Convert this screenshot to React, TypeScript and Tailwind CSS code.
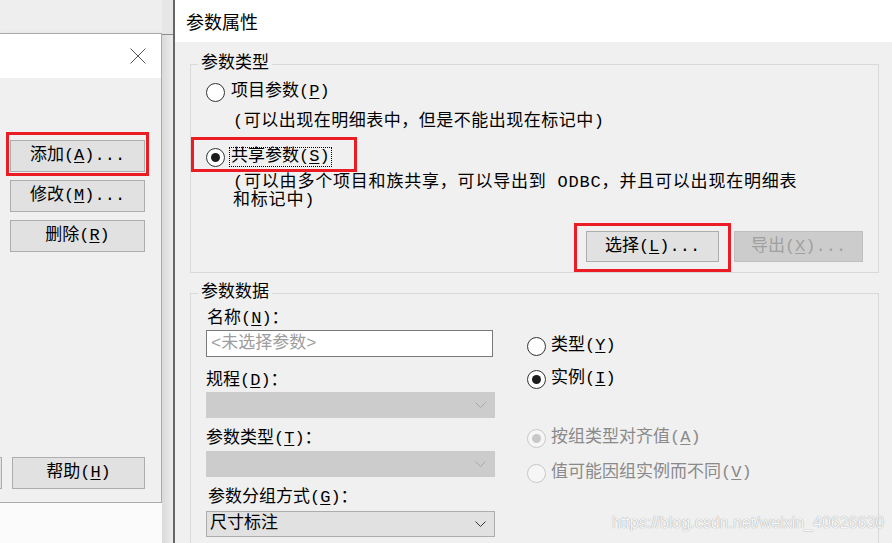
import React from "react";

const body = "font-['Liberation_Mono','Noto_Sans_CJK_SC',monospace] text-[17px] text-black";

function Radio({ checked = false, disabled = false }: { checked?: boolean; disabled?: boolean }) {
  return (
    <div
      className={
        disabled
          ? "w-[19px] h-[19px] shrink-0 rounded-full border-[1.5px] border-[#c8c8c8] bg-[#f6f6f6] flex items-center justify-center"
          : "w-[19px] h-[19px] shrink-0 rounded-full border-[1.5px] border-[#333333] bg-white flex items-center justify-center"
      }
    >
      {checked && (
        <div className={disabled ? "w-[9px] h-[9px] rounded-full bg-[#c8c8c8]" : "w-[9px] h-[9px] rounded-full bg-[#1c1c1c]"} />
      )}
    </div>
  );
}

function Chevron({ color }: { color: string }) {
  return (
    <svg width="11" height="7" viewBox="0 0 11 7" fill="none" stroke={color} strokeWidth="1">
      <polyline points="0.5,0.5 5.5,5.5 10.5,0.5" />
    </svg>
  );
}

function DlgButton({ children, className = "" }: { children: React.ReactNode; className?: string }) {
  return (
    <div
      className={
        "h-[32px] bg-[#e1e1e1] border border-[#adadad] flex items-center justify-center leading-[20px] " + className
      }
    >
      {children}
    </div>
  );
}

export default function App() {
  return (
    <div className={"relative w-[892px] h-[543px] overflow-hidden flex bg-[#f0f0f0] " + body}>
      {/* Left: dialog behind */}
      <div className="w-[173px] h-full flex shrink-0">
        <div className="w-[162px] h-full flex flex-col">
          <div className="h-[33px] shrink-0 bg-[#eeeeee]" />
          <div className="h-[470px] shrink-0 flex flex-col border-y border-r border-[#aaaaaa] shadow-[3px_3px_8px_rgba(0,0,0,0.12)]">
            <div className="h-[44px] shrink-0 bg-white flex items-center justify-end pr-[15px]">
              <svg width="16" height="16" viewBox="0 0 16 16" stroke="#555555" strokeWidth="1">
                <line x1="0.5" y1="0.5" x2="15.5" y2="15.5" />
                <line x1="15.5" y1="0.5" x2="0.5" y2="15.5" />
              </svg>
            </div>
            <div className="flex-1 bg-[#f0f0f0] flex flex-col pt-[62px] pb-[13px]">
              <div className="ml-[10px] w-[135px] flex flex-col gap-[8px]">
                <DlgButton>
                  添加(<span className="underline underline-offset-2">A</span>)...
                </DlgButton>
                <DlgButton>
                  修改(<span className="underline underline-offset-2">M</span>)...
                </DlgButton>
                <DlgButton>
                  删除(<span className="underline underline-offset-2">R</span>)
                </DlgButton>
              </div>
              <div className="mt-auto flex">
                <div className="w-[2px] h-[32px] border-y border-r border-[#adadad] bg-[#e1e1e1]" />
                <DlgButton className="ml-[10px] w-[133px]">
                  帮助(<span className="underline underline-offset-2">H</span>)
                </DlgButton>
              </div>
            </div>
          </div>
          <div className="flex-1 bg-[#fbfbfb]" />
        </div>
        <div className="w-[11px] h-full flex flex-col">
          <div className="h-[35px] shrink-0 bg-[#e6e6e6] border-b border-[#8c8c8c]" />
          <div className="flex-1 bg-gradient-to-r from-[#dadada] to-[#ececec]" />
        </div>
      </div>
      <div className="w-[2px] h-full bg-[#666666] shrink-0" />

      {/* Right: 参数属性 */}
      <div className="flex-1 flex flex-col">
        <div className="h-[42px] shrink-0 bg-white flex items-center pl-[11px] font-['Noto_Sans_CJK_SC',sans-serif] text-[18px]">
          参数属性
        </div>
        <div className="flex-1 min-h-0 bg-[#f0f0f0] pl-[15px] pr-[13px]">
          <fieldset className="mt-[12px] border border-[#d9d9d9] pb-[10px]">
            <legend className="ml-[7px] px-[3px] leading-[20px]">参数类型</legend>
            <div className="mt-[8px] ml-[15px] h-[20px] flex items-center gap-[6px]">
              <Radio />
              <span className="leading-[20px]">
                项目参数(<span className="underline underline-offset-2">P</span>)
              </span>
            </div>
            <div className="mt-[10px] ml-[42px] leading-[20px] tracking-[0.5px]">
              (可以出现在明细表中，但是不能出现在标记中)
            </div>
            <div className="mt-[15px] ml-[15px] h-[20px] flex items-center gap-[4px]">
              <Radio checked />
              <span className="border border-dotted border-black px-[1px] leading-[18px]">
                共享参数(<span className="underline underline-offset-2">S</span>)
              </span>
            </div>
            <div className="mt-[7px] ml-[42px] tracking-[0.8px] flex flex-col items-start">
              <span className="block h-[18px] leading-[18px]">(可以由多个项目和族共享，可以导出到 ODBC，并且可以出现在明细表</span>
              <span className="block h-[18px] leading-[18px]">和标记中)</span>
            </div>
            <div className="mt-[21px] flex justify-end gap-[15px] pr-[15px]">
              <div className="w-[133px] h-[31px] bg-[#e1e1e1] border border-[#adadad] flex items-center justify-center">
                选择(<span className="underline underline-offset-2">L</span>)...
              </div>
              <div className="w-[129px] h-[31px] bg-[#cccccc] border border-[#bfbfbf] flex items-center justify-center text-[#a0a0a0]">
                导出(<span className="underline underline-offset-2">X</span>)...
              </div>
            </div>
          </fieldset>

          <fieldset className="mt-[10px] border border-[#d9d9d9] pb-[10px]">
            <legend className="ml-[7px] px-[3px] leading-[20px]">参数数据</legend>
            <div className="flex">
              <div className="ml-[15px] w-[289px] flex flex-col">
                <div className="mt-[6px] pl-[1px] leading-[20px]">
                  名称(<span className="underline underline-offset-2">N</span>)：
                </div>
                <div className="mt-[1px] w-[287px] h-[27px] border border-[#7a7a7a] bg-white flex items-center pl-[4px] text-[#9d9d9d]">
                  &lt;未选择参数&gt;
                </div>
                <div className="mt-[14px] leading-[20px]">
                  规程(<span className="underline underline-offset-2">D</span>)：
                </div>
                <div className="mt-[1px] h-[26px] bg-[#cccccc] border border-[#cccccc] flex items-center justify-end pr-[8px]">
                  <Chevron color="#a8a8a8" />
                </div>
                <div className="mt-[11px] leading-[20px]">
                  参数类型(<span className="underline underline-offset-2">T</span>)：
                </div>
                <div className="mt-[2px] h-[26px] bg-[#cccccc] border border-[#cccccc] flex items-center justify-end pr-[8px]">
                  <Chevron color="#a8a8a8" />
                </div>
                <div className="mt-[11px] pl-[2px] leading-[20px]">
                  参数分组方式(<span className="underline underline-offset-2">G</span>)：
                </div>
                <div className="mt-[3px] h-[26px] bg-[#e1e1e1] border border-[#adadad] flex items-center justify-between pl-[3px] pr-[8px]">
                  <span>尺寸标注</span>
                  <Chevron color="#333333" />
                </div>
              </div>
              <div className="ml-[32px] flex flex-col">
                <div className="mt-[33px] h-[20px] flex items-center gap-[5px]">
                  <Radio />
                  <span>
                    类型(<span className="underline underline-offset-2">Y</span>)
                  </span>
                </div>
                <div className="mt-[13px] h-[20px] flex items-center gap-[5px]">
                  <Radio checked />
                  <span>
                    实例(<span className="underline underline-offset-2">I</span>)
                  </span>
                </div>
                <div className="mt-[39px] h-[20px] flex items-center gap-[5px] text-[#8a8a8a]">
                  <Radio checked disabled />
                  <span>
                    按组类型对齐值(<span className="underline underline-offset-2">A</span>)
                  </span>
                </div>
                <div className="mt-[15px] h-[20px] flex items-center gap-[5px] text-[#8a8a8a]">
                  <Radio disabled />
                  <span>
                    值可能因组实例而不同(<span className="underline underline-offset-2">V</span>)
                  </span>
                </div>
              </div>
            </div>
          </fieldset>
        </div>
      </div>

      {/* annotation boxes */}
      <div className="absolute left-[6px] top-[132px] w-[143px] h-[44px] border-[3px] border-[#ec1c24]" />
      <div className="absolute left-[191px] top-[137px] w-[166px] h-[35px] border-[3px] border-[#ec1c24]" />
      <div className="absolute left-[574px] top-[223px] w-[157px] h-[49px] border-[3px] border-[#ec1c24]" />

      {/* watermark */}
      <div className="absolute left-[612px] top-[513px] font-['Liberation_Sans',sans-serif] text-[16px] leading-[20px] text-[#f7f7f7] [text-shadow:0_0_1px_rgba(0,0,0,0.45)]">
        https://blog.csdn.net/weixin_40626630
      </div>
    </div>
  );
}
